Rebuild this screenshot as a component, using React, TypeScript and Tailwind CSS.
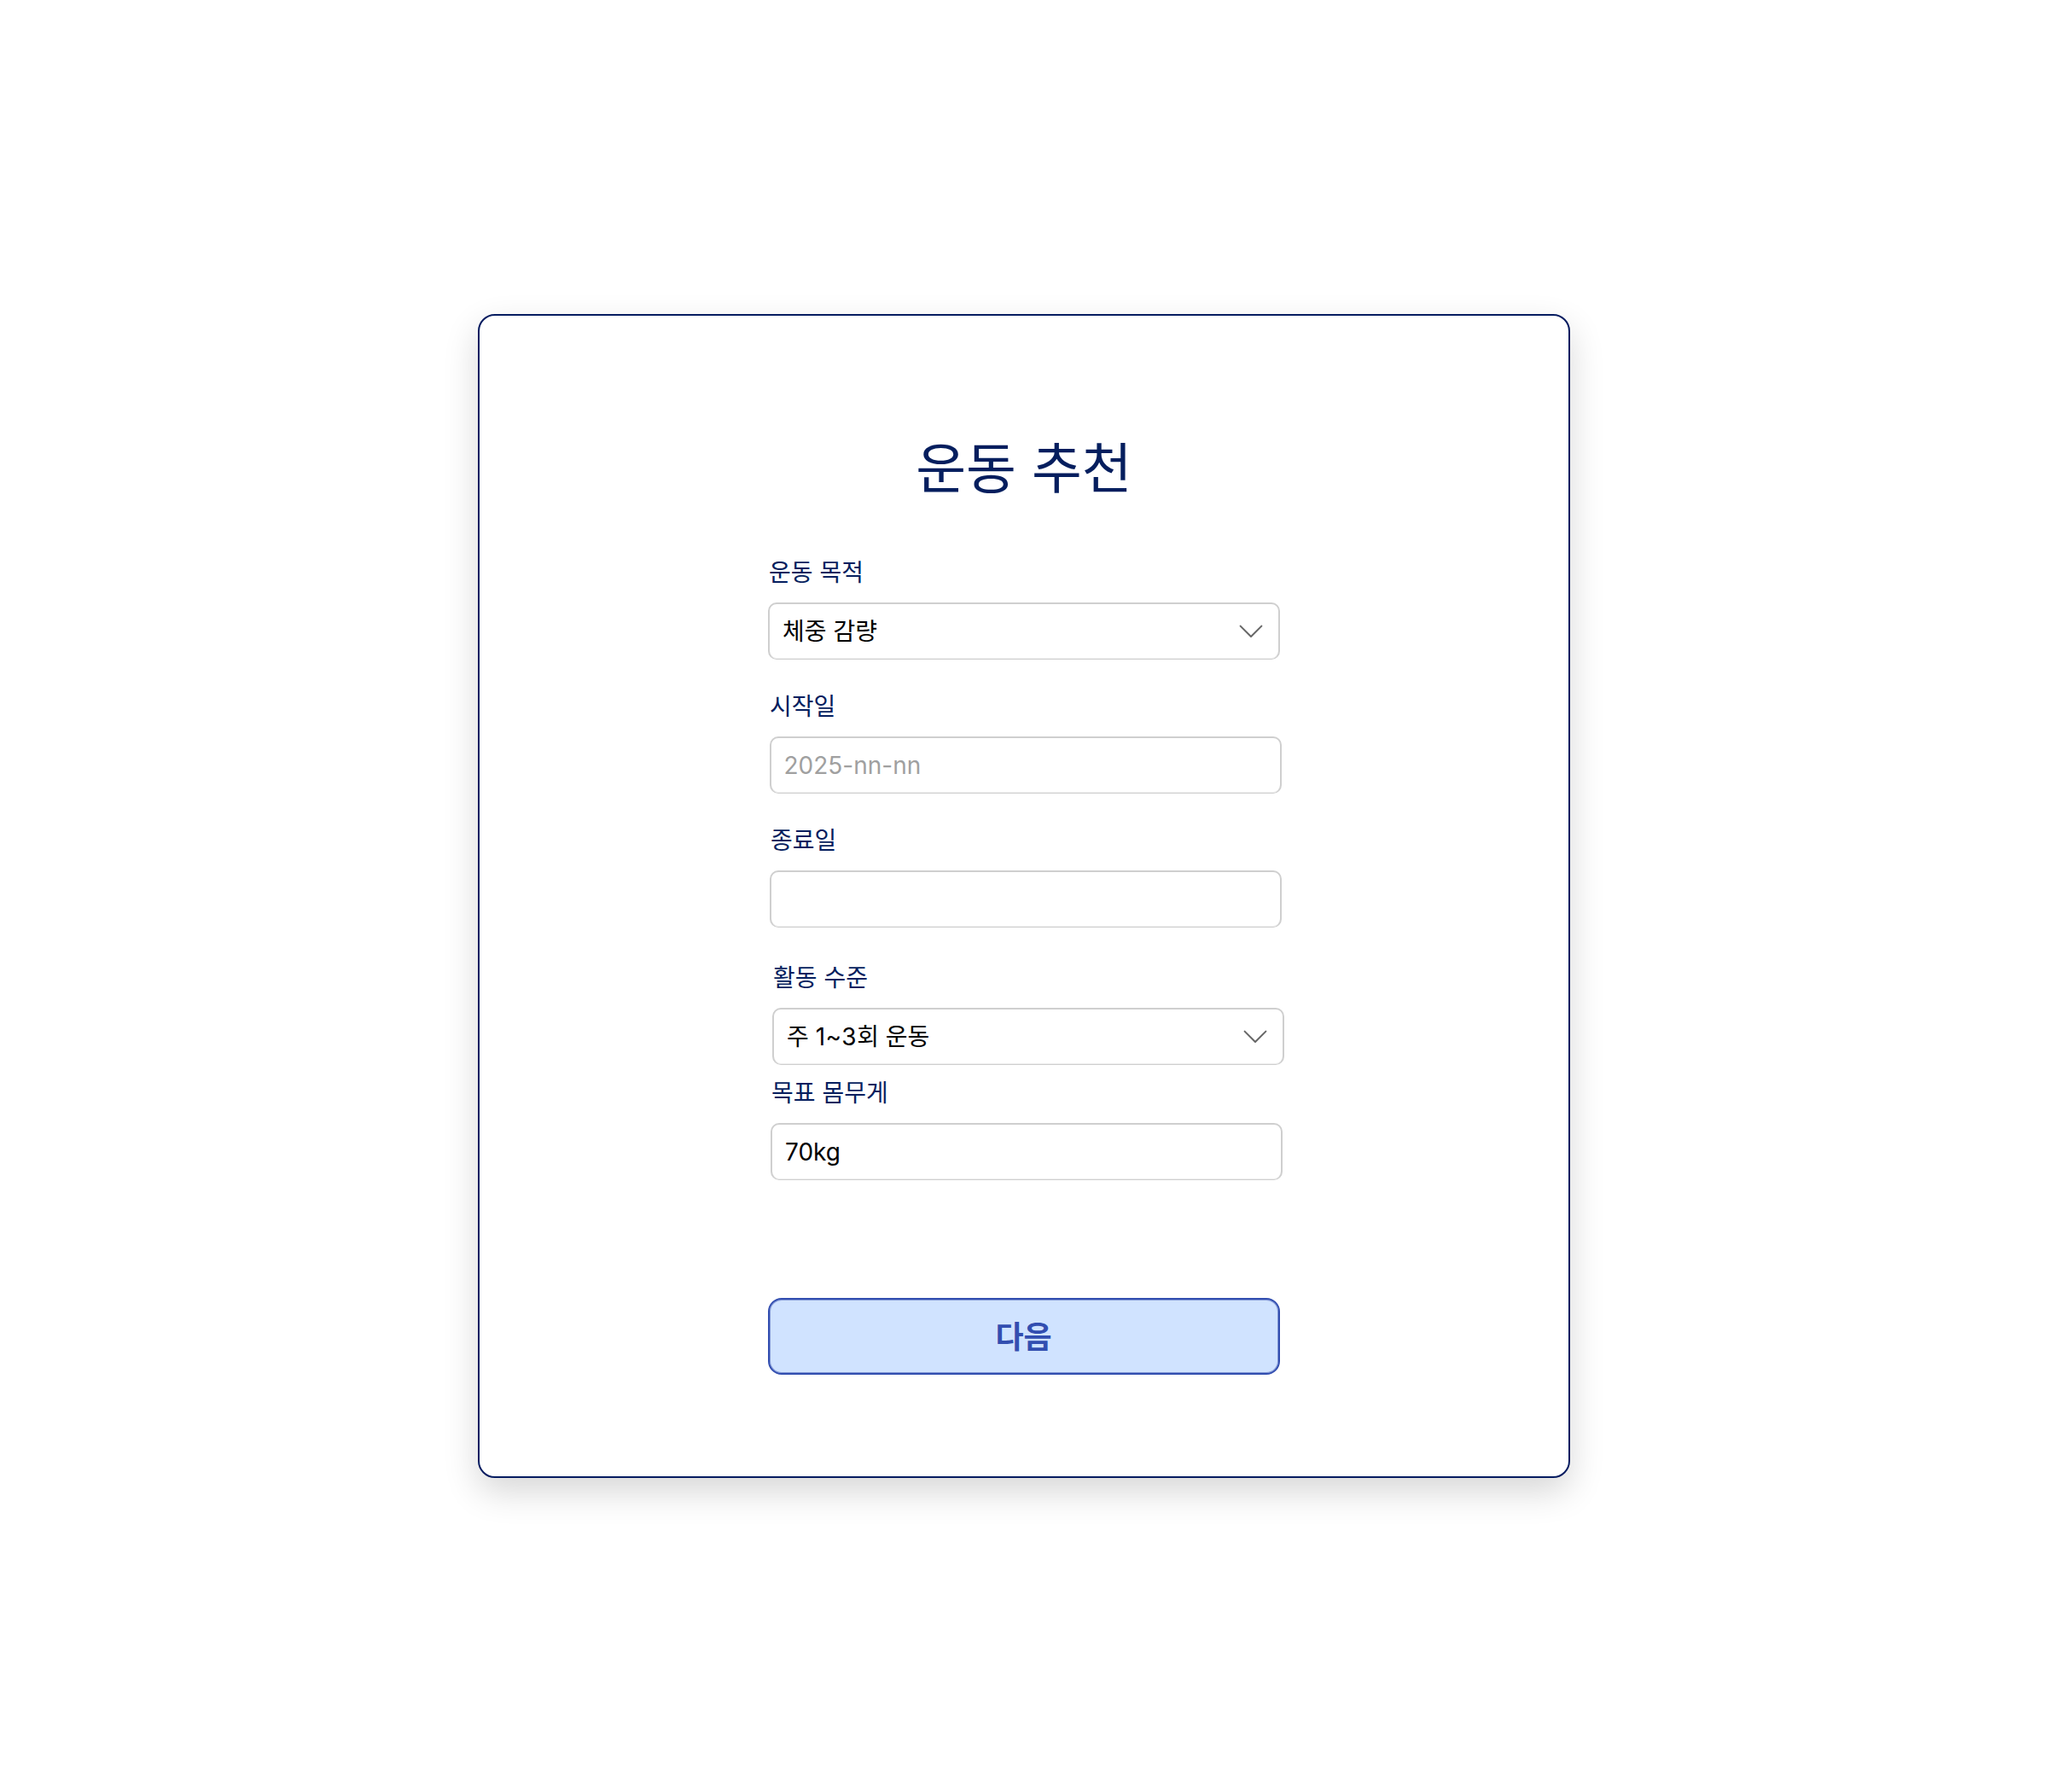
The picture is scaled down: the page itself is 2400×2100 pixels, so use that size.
import React from "react";

type FieldProps = {
  label: string;
  value: React.ReactNode;
  select?: boolean;
  muted?: boolean;
  className: string;
  labelClass?: string;
};

function Chevron() {
  return (
    <svg width="30" height="20" viewBox="0 0 30 20" fill="none" className="block">
      <path d="M2.6 3.6 15 16 27.4 3.6" stroke="#666" strokeWidth="2" strokeLinecap="round" strokeLinejoin="round" />
    </svg>
  );
}

function Field({ label, value, select, muted, className, labelClass = "pl-px" }: FieldProps) {
  return (
    <div className={`w-[600px] ${className}`}>
      <div className={`h-[34px] text-[28px] leading-[34px] text-[#051e5e] whitespace-pre ${labelClass}`}>{label}</div>
      <div className="mt-[18px] flex h-[67px] items-center justify-between rounded-[10px] border-2 border-b border-[#cfcfcf] bg-white pl-[15px] pr-[17px] shadow-[inset_0_-1px_0_#efefef]">
        <span className={`text-[28px] leading-[34px] whitespace-pre ${muted ? "-ml-[0.5px] text-[#a0a0a0]" : "text-black"}`}>{value}</span>
        {select && <Chevron />}
      </div>
    </div>
  );
}

export default function App() {
  return (
    <div className="flex h-[2100px] w-[2400px] flex-col items-center bg-white pt-[368px] font-['Inter','Noto_Sans_CJK_KR',sans-serif]">
      <main className="flex h-[1364px] w-[1280px] flex-col rounded-[20px] border-2 border-[#051c60] bg-white pl-[338px] shadow-[0_16px_40px_rgba(0,0,0,0.16)]">
        <h1 className="mt-[140px] h-[78px] w-[600px] text-center text-[64px] leading-[78px] font-normal text-[#051e5e]">운동 추천</h1>
        <Field className="mt-[66px]" label="운동 목적" value="체중 감량" select />
        <Field className="mt-[38px] ml-[2px]" label="시작일" value="2025-nn-nn" muted labelClass="pl-0" />
        <Field className="mt-[38px] ml-[2px]" label="종료일" value="" />
        <Field
          className="mt-[42px] ml-[5px]"
          label="활동 수준"
          value={<>주 <span className="tracking-[0.55px]">1~3</span>회 운동</>}
          select
        />
        <Field className="mt-[16px] ml-[3px]" label="목표 몸무게" value="70kg" />
        <button className="mt-[138px] h-[90px] w-[600px] rounded-[16px] border-2 border-[#324eb0] bg-[#d0e3ff] pt-[2px] pr-[1px] text-[36px] leading-[44px] font-bold text-[#324eb0] shadow-[inset_0_0_0_1px_#8096d4]">다음</button>
      </main>
    </div>
  );
}
